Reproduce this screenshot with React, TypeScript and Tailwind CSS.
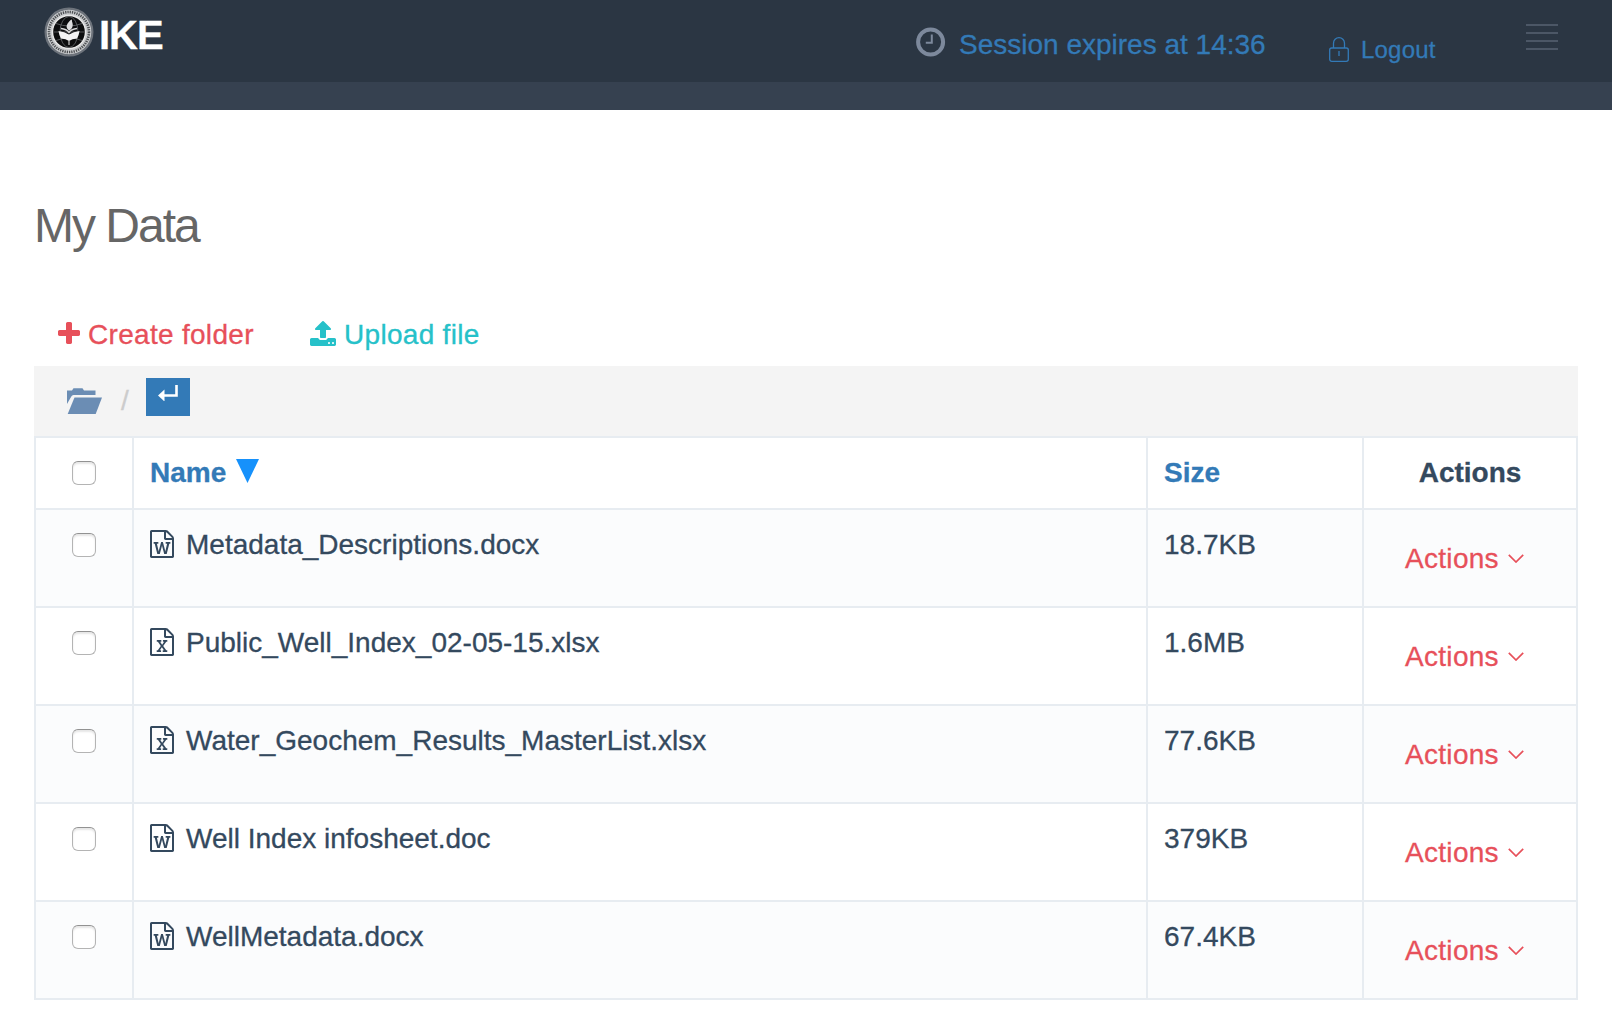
import React from "react";

const WORD =
  "M1468 380q28 28 48 76t20 88v1152q0 40-28 68t-68 28h-1344q-40 0-68-28t-28-68v-1600q0-40 28-68t68-28h896q40 0 88 20t76 48zm-444-244v376h376q-10-29-22-41l-313-313q-12-12-41-22zm384 1528v-1024h-416q-40 0-68-28t-28-68v-416h-768v1536h1280zm-1175-896v107h70l164 661h159l128-485q7-20 10-46 2-16 2-24h4l3 24q1 3 3.5 20t5.5 26l128 485h159l164-661h70v-107h-300v107h90l-99 438q-5 20-7 46l-2 21h-4l-3-21q-1-5-4-21t-5-25l-144-545h-114l-144 545q-2 9-4.500 24.500t-3.500 21.500l-4 21h-4l-2-21q-2-26-7-46l-99-438h90v-107h-300z";
const EXCEL =
  "M1468 380q28 28 48 76t20 88v1152q0 40-28 68t-68 28h-1344q-40 0-68-28t-28-68v-1600q0-40 28-68t68-28h896q40 0 88 20t76 48zm-444-244v376h376q-10-29-22-41l-313-313q-12-12-41-22zm384 1528v-1024h-416q-40 0-68-28t-28-68v-416h-768v1536h1280zm-979-234v106h281v-106h-75l103-161q5-7 10-16.500t7.500-13.500 3.500-4h2q1 4 5 10 2 4 4.500 7.500t6 8 6.500 8.500l107 161h-76v106h291v-106h-68l-192-273 195-282h67v-107h-279v107h74l-103 159q-4 7-10 16.500t-9 13.500l-2 3h-2q-1-4-5-10-6-11-17-23l-106-159h76v-107h-290v107h68l189 272-194 283h-68z";

const files = [
  { name: "Metadata_Descriptions.docx", size: "18.7KB", icon: WORD },
  { name: "Public_Well_Index_02-05-15.xlsx", size: "1.6MB", icon: EXCEL },
  { name: "Water_Geochem_Results_MasterList.xlsx", size: "77.6KB", icon: EXCEL },
  { name: "Well Index infosheet.doc", size: "379KB", icon: WORD },
  { name: "WellMetadata.docx", size: "67.4KB", icon: WORD },
];

function Seal() {
  return (
    <svg className="block h-[50px] w-[50px]" viewBox="0 0 50 50" fill="none">
      <circle cx="25" cy="25" r="24.5" fill="#6d737b" />
      <circle cx="25" cy="25" r="22.300" fill="#c9cbcd" />
      <circle cx="25" cy="25" r="20" stroke="#4c4f52" strokeWidth="2.600" strokeDasharray="1.300 1" />
      <circle cx="25" cy="25" r="16.500" fill="#0c0d0e" stroke="#e8e8e8" strokeWidth="1.400" />
      <g stroke="#66686b" strokeWidth="0.800">
        <ellipse cx="25" cy="25" rx="9" ry="15.500" />
        <path d="M9.500 25h31M12 16.500q13 5 26 0M12 33.500q13-5 26 0" />
      </g>
      <path d="M14.500 24q6 .500 10.500 3.500 4.500-3 10.500-3.500-.500 4-2.500 7.500-5 0-8 2.500-3-2.500-8-2.500-2-3.500-2.500-7.500z" fill="#f4f4f4" />
      <path d="M17 21.500q5.500.500 8 4 2.500-3.500 8-4" stroke="#d5d5d5" strokeWidth="1.400" />
      <path d="M25 23.500c-3.500-2.500-2.500-5.500-1-7.500 1-1.500 2-3 4-3.500-.500 2.500 1.500 4 .500 7-.500 2-2 3.500-3.500 4z" fill="#dedede" />
      <path d="M25 33v5" stroke="#b9b9b9" strokeWidth="1.300" />
    </svg>
  );
}

function Checkbox() {
  return (
    <input
      type="checkbox"
      className="block h-6 w-6 appearance-none rounded-[6px] border border-[#b4b4b4] border-t-[#929292] bg-white shadow-[inset_0_2px_2px_#e6e6e6]"
    />
  );
}

export default function App() {
  return (
    <div className="h-[1016px] w-[1612px] overflow-hidden bg-white font-['Liberation_Sans',Arial,sans-serif] text-[28px] leading-8 text-[#34495e] [-webkit-text-stroke:0.300px]">
      <header className="flex h-[82px] items-start bg-[#2b3643]">
        <div className="ml-11 mt-[7px]">
          <Seal />
        </div>
        <div className="ml-[5px] mt-[11px] w-[69px] text-[40px] font-bold leading-[48px] tracking-[-1px] text-white">IKE</div>
        <svg className="ml-[748px] mt-[27px] block h-[30px] w-[30px]" viewBox="0 0 30 30" fill="none">
          <circle cx="14.600" cy="15" r="12.500" stroke="#7d899c" strokeWidth="4" />
          <path d="M15.800 7.500v8.300h-6" stroke="#7d899c" strokeWidth="2" />
        </svg>
        <a className="ml-[13px] mt-[29px] w-[308px] whitespace-nowrap text-[#337ab7]">Session expires at 14:36</a>
        <svg className="ml-[62px] mt-[37px] block h-[25px] w-5" viewBox="0 0 20 25" fill="none" stroke="#337ab7" strokeWidth="1.300">
          <rect x="0.700" y="11" width="18.600" height="13.300" rx="2" />
          <path d="M4.500 11V6.200a5.500 5.500 0 0 1 11 0V11M10 14v5" />
        </svg>
        <a className="ml-3 mt-[34px] w-[76px] text-2xl leading-8 tracking-[0.200px] text-[#337ab7]">Logout</a>
        <div className="ml-[89px] mt-6 flex w-8 flex-col gap-1.5">
          <span className="h-0.5 bg-[#4c5766]" />
          <span className="h-0.5 bg-[#4c5766]" />
          <span className="h-0.5 bg-[#4c5766]" />
          <span className="h-0.5 bg-[#4c5766]" />
        </div>
      </header>
      <div className="h-7 bg-[#364150]" />

      <main className="px-[34px]">
        <h1 className="pt-[88px] text-[48px] leading-[56px] tracking-[-2px] text-[#666] [-webkit-text-stroke:0px]">My Data</h1>

        <div className="flex h-[112px] pl-6 pt-[65px]">
          <a className="flex w-[252px] tracking-[0.300px] text-[#e7505a]">
            <svg className="mr-2 mt-[3px] block h-[22px] w-[22px]" viewBox="0 0 1408 1408" fill="currentColor">
              <path d="M1408 608v192q0 40-28 68t-68 28h-416v416q0 40-28 68t-68 28h-192q-40 0-68-28t-28-68v-416h-416q-40 0-68-28t-28-68v-192q0-40 28-68t68-28h416v-416q0-40 28-68t68-28h192q40 0 68 28t28 68v416h416q40 0 68 28t28 68z" />
            </svg>
            Create folder
          </a>
          <a className="flex tracking-[0.300px] text-[#26c1c9]">
            <svg className="mr-2 mt-0.5 block h-[25px] w-[26px]" viewBox="0 64 1664 1600" fill="currentColor">
              <path d="M1280 1472q0-26-19-45t-45-19-45 19-19 45 19 45 45 19 45-19 19-45zm256 0q0-26-19-45t-45-19-45 19-19 45 19 45 45 19 45-19 19-45zm128-224v320q0 40-28 68t-68 28h-1472q-40 0-68-28t-28-68v-320q0-40 28-68t68-28h427q21 56 70.500 92t110.500 36h256q61 0 110.500-36t70.500-92h427q40 0 68 28t28 68zm-325-648q-17 40-59 40h-256v448q0 26-19 45t-45 19h-256q-26 0-45-19t-19-45v-448h-256q-42 0-59-40-17-39 14-69l448-448q18-19 45-19t45 19l448 448q31 30 14 69z" />
            </svg>
            Upload file
          </a>
        </div>

        <nav className="flex h-[70px] items-start bg-[#f4f4f4]">
          <svg className="ml-[33px] mt-[22px] block h-[26px] w-[35px]" viewBox="0 0 35 26" fill="#6b8db4">
            <path d="M0 16V2.500h5L6.500.300h9L17 2.500h11.500V7H6.500q-1.500 0-2.200 1.500z" />
            <path d="M7.500 9.500H35L28.700 26H.700z" />
          </svg>
          <span className="ml-[19px] mt-[19px] w-2 text-[#ccc]">/</span>
          <button className="ml-[17px] mt-3 flex h-[38px] w-11 justify-center bg-[#337ab7] pt-[7px]">
            <svg className="block h-4 w-5" viewBox="0 0 20 16" fill="none">
              <path d="M18.500 0v10.500H5" stroke="#fff" strokeWidth="2.600" />
              <path d="M6.500 4.500v12L0 10.500z" fill="#fff" />
            </svg>
          </button>
        </nav>

        <div className="border-b-2 border-r-2 border-[#e7ecf1]">
          <div className="grid h-[72px] grid-cols-[98px_1014px_216px_214px] border-t-2 border-[#e7ecf1] font-bold">
            <div className="flex border-l-2 border-[#e7ecf1] pl-9 pt-[23px]"><Checkbox /></div>
            <div className="flex border-l-2 border-[#e7ecf1] pl-4 pt-[19px] text-[#337ab7]">
              Name
              <svg className="ml-2.5 mt-0.5 block h-6 w-[23px]" viewBox="0 0 23 24" fill="#1691fb"><path d="M0 0h23L11.500 24z" /></svg>
            </div>
            <div className="border-l-2 border-[#e7ecf1] pl-4 pt-[19px] text-[#337ab7]">Size</div>
            <div className="border-l-2 border-[#e7ecf1] pt-[19px] text-center">Actions</div>
          </div>
          {files.map((f) => (
            <div
              key={f.name}
              className="grid h-[98px] grid-cols-[98px_1014px_216px_214px] border-t-2 border-[#e7ecf1] odd:bg-white even:bg-[#fbfcfd]"
            >
              <div className="flex border-l-2 border-[#e7ecf1] pl-9 pt-[23px]"><Checkbox /></div>
              <div className="flex border-l-2 border-[#e7ecf1] pl-4 pt-[19px]">
                <svg className="mr-3 mt-px block h-7 w-6" viewBox="0 0 1536 1792" fill="currentColor"><path d={f.icon} /></svg>
                {f.name}
              </div>
              <div className="border-l-2 border-[#e7ecf1] pl-4 pt-[19px]">{f.size}</div>
              <div className="flex border-l-2 border-[#e7ecf1] pl-[41px] pt-[33px] tracking-[0.300px] text-[#e7505a]">
                Actions
                <svg className="ml-[9px] mt-[11px] block h-[9px] w-4" viewBox="0 0 16 9" fill="none" stroke="currentColor" strokeWidth="1.700">
                  <path d="M.800.800 8 8 15.200.800" />
                </svg>
              </div>
            </div>
          ))}
        </div>
      </main>
    </div>
  );
}
